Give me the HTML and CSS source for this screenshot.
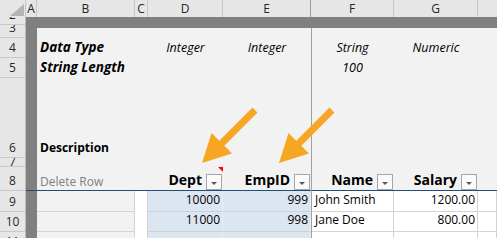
FILE: index.html
```html
<!DOCTYPE html>
<html>
<head>
<meta charset="utf-8">
<link rel="stylesheet" href="styles.css">
</head>
<body>
<div class="app">
  <div class="frame">
    <div class="colbar">
      <div class="ch w-corner"><svg class="corner-tri" width="14" height="12" viewBox="0 0 14 12"><polygon points="14,0 14,12 0,12" fill="#b4b4b4"/></svg></div>
      <div class="ch w-a">A</div>
      <div class="ch w-b">B</div>
      <div class="ch w-c">C</div>
      <div class="ch w-d">D</div>
      <div class="ch w-e pane">E</div>
      <div class="ch w-f">F</div>
      <div class="ch w-g">G</div>
      <div class="ch w-h"></div>
    </div>
    <div class="main">
      <div class="rowhdr">
        <div class="rh h8">2</div>
        <div class="rh h13">3</div>
        <div class="rh h20">4</div>
        <div class="rh h20">5</div>
        <div class="rh h80">6</div>
        <div class="rh h9">7</div>
        <div class="rh h24">8</div>
        <div class="rh h21">9</div>
        <div class="rh h20">10</div>
        <div class="rh h20">11</div>
      </div>
      <div class="sheet">
        <div class="colA a-top"></div>
        <div class="colA a-8"></div>
        <div class="colA a-bot"></div>
        <div class="topbar"></div>

        <div class="c cb r4 bi">Data Type</div>
        <div class="c cd r4 it mid">Integer</div>
        <div class="c ce r4 it mid">Integer</div>
        <div class="c cf r4 it mid">String</div>
        <div class="c cg r4 it mid">Numeric</div>

        <div class="c cb r5 bi">String Length</div>
        <div class="c cf r5 it mid">100</div>

        <div class="c cb r6 bold">Description</div>

        <div class="c cb r8 hdrrow muted">Delete Row</div>
        <div class="c cc r8 hdrrow"></div>
        <div class="c cd r8 hdrrow hd flag"><span class="ht">Dept</span><span class="dd"><i class="tri"></i></span></div>
        <div class="c ce r8 hdrrow hd"><span class="ht">EmpID</span><span class="dd"><i class="tri"></i></span></div>
        <div class="c cf r8 hdrrow hd"><span class="ht">Name</span><span class="dd"><i class="tri"></i></span></div>
        <div class="c cg r8 hdrrow hd"><span class="ht">Salary</span><span class="dd"><i class="tri"></i></span></div>
        <div class="c ch8 r8 hdrrow"></div>

        <div class="c cb r9 d-grey"></div>
        <div class="c cc r9 d-white"></div>
        <div class="c cd r9 d-blue num">10000</div>
        <div class="c ce r9 d-blue num">999</div>
        <div class="c cf r9 d-cell">John Smith</div>
        <div class="c cg r9 d-cell num">1200.00</div>
        <div class="c ch8 r9 d-cell"></div>

        <div class="c cb r10 d-grey"></div>
        <div class="c cc r10 d-white"></div>
        <div class="c cd r10 d-blue num">11000</div>
        <div class="c ce r10 d-blue num">998</div>
        <div class="c cf r10 d-cell">Jane Doe</div>
        <div class="c cg r10 d-cell num">800.00</div>
        <div class="c ch8 r10 d-cell"></div>

        <div class="c cb r11 d-grey"></div>
        <div class="c cc r11 d-white"></div>
        <div class="c cd r11 d-blue"></div>
        <div class="c ce r11 d-blue"></div>
        <div class="c cf r11 d-cell"></div>
        <div class="c cg r11 d-cell"></div>
        <div class="c ch8 r11 d-cell"></div>

        <div class="divider"></div>
      </div>
    </div>
  </div>
  <svg class="arrows" width="497" height="243" viewBox="0 0 497 243">
    <polygon fill="#f6a623" points="252.5,107.5 257.5,112.5 224.3,145.7 232,153.5 202,163 211.5,133 219.3,140.7"/>
    <polygon fill="#f6a623" points="329.5,107.5 334.5,112.5 301.3,145.7 309,153.5 279,163 288.5,133 296.3,140.7"/>
  </svg>
</div>
</body>
</html>
```
FILE: styles.css
```css
html, body {
  margin: 0;
  padding: 0;
  background: #ffffff;
}
body {
  font-family: "Open Sans", "Noto Sans", "DejaVu Sans", sans-serif;
  color: #000;
}
.app {
  position: relative;
  width: 497px;
  height: 243px;
  overflow: hidden;
  background: #ffffff;
}
.frame {
  height: 238px;
  overflow: hidden;
}
.colbar {
  display: flex;
  height: 17px;
  background: #e6e6e6;
}
.ch {
  box-sizing: border-box;
  flex: none;
  height: 17px;
  border-right: 1px solid #c6c6c6;
  text-align: center;
  font-size: 12px;
  line-height: 17px;
  color: #262626;
}
.ch.pane { border-right-color: #9c9c9c; }
.w-corner { width: 26px; position: relative; }
.corner-tri { display: block; margin: 4px 0 0 10px; }
.w-a { width: 11px; }
.w-b { width: 98px; }
.w-c { width: 13px; }
.w-d { width: 75px; }
.w-e { width: 88px; }
.w-f { width: 83px; }
.w-g { width: 84px; }
.w-h { width: 19px; border-right: none; }

.main {
  display: flex;
}
.rowhdr {
  box-sizing: border-box;
  width: 26px;
  flex: none;
  background: #e6e6e6;
  border-right: 1px solid #bdbdbd;
}
.rh {
  box-sizing: border-box;
  display: flex;
  align-items: flex-end;
  justify-content: center;
  overflow: hidden;
  border-bottom: 1px solid #c8c8c8;
  font-size: 12px;
  line-height: 16px;
  padding-bottom: 1px;
  color: #262626;
}
.h8 { height: 8px; }
.h9 { height: 9px; line-height: 9px; padding-bottom: 0; }
.h13 { height: 13px; }
.h20 { height: 20px; }
.h21 { height: 21px; }
.h24 { height: 24px; }
.h80 { height: 80px; }

.sheet {
  display: grid;
  grid-template-columns: 11px 98px 13px 75px 88px 83px 84px 19px;
  grid-template-rows: 11px 10px 20px 20px 80px 9px 24px 21px 20px 20px;
  background: #f2f2f2;
}
.colA { grid-column: 1; background: #808080; }
.a-top { grid-row: 1 / 7; }
.a-8 { grid-row: 7; box-sizing: border-box; border-bottom: 1px solid #1f4e79; }
.a-bot { grid-row: 8 / -1; }
.topbar { grid-column: 2 / -1; grid-row: 1; background: #808080; }
.divider {
  grid-column: 6;
  grid-row: 2 / -1;
  border-left: 1px solid #a0a0a0;
}

.cb { grid-column: 2; }
.cc { grid-column: 3; }
.cd { grid-column: 4; }
.ce { grid-column: 5; }
.cf { grid-column: 6; }
.cg { grid-column: 7; }
.ch8 { grid-column: 8; }
.r4 { grid-row: 3; }
.r5 { grid-row: 4; }
.r6 { grid-row: 5; }
.r8 { grid-row: 7; }
.r9 { grid-row: 8; }
.r10 { grid-row: 9; }
.r11 { grid-row: 10; }

.c {
  box-sizing: border-box;
  display: flex;
  align-items: flex-end;
  white-space: nowrap;
  min-width: 0;
  font-size: 12px;
  line-height: 16px;
  padding: 0 3px 2px 3px;
}
.bi { font-weight: 700; font-style: italic; font-size: 13.5px; line-height: 17px; }
.bold { font-weight: 700; }
.it { font-style: italic; font-size: 12.5px; }
.mid { justify-content: center; padding-left: 0; padding-right: 0; }
.muted { color: #808080; }

.hdrrow {
  border-bottom: 1px solid #1f4e79;
  padding-bottom: 0;
}
.hd {
  justify-content: flex-end;
  gap: 4px;
  padding-right: 1px;
  font-weight: 700;
  font-size: 14px;
  line-height: 18px;
}
.ht { padding-bottom: 1px; }
.dd {
  box-sizing: border-box;
  flex: none;
  width: 16px;
  height: 16px;
  border: 1px solid #a6a6a6;
  background: #fbfbfb;
  display: flex;
  align-items: center;
  justify-content: center;
}
.tri {
  width: 0;
  height: 0;
  border-left: 3px solid transparent;
  border-right: 3px solid transparent;
  border-top: 3px solid #5a5a5a;
  margin-top: 3px;
}
.flag { position: relative; }
.flag::after {
  content: "";
  position: absolute;
  top: 0;
  right: 0;
  width: 0;
  height: 0;
  border-top: 5px solid #ff0000;
  border-left: 5px solid transparent;
}

.d-grey {
  background: #f2f2f2;
  border-right: 1px solid #d4d4d4;
  border-bottom: 1px solid #d4d4d4;
}
.d-white {
  background: #ffffff;
  border-right: 1px solid #d4d4d4;
}
.d-blue {
  background: #dce6f1;
  border-right: 1px solid #e8edf3;
  border-bottom: 1px solid #c9d2dc;
}
.d-cell {
  background: #ffffff;
  border-right: 1px solid #d4d4d4;
  border-bottom: 1px solid #d4d4d4;
}
.r9, .r10, .r11 { padding-bottom: 3px; }
.num { justify-content: flex-end; padding-right: 2px; }
.cf.d-cell { padding-left: 4px; }

.arrows {
  position: absolute;
  top: 0;
  left: 0;
  pointer-events: none;
}
```
